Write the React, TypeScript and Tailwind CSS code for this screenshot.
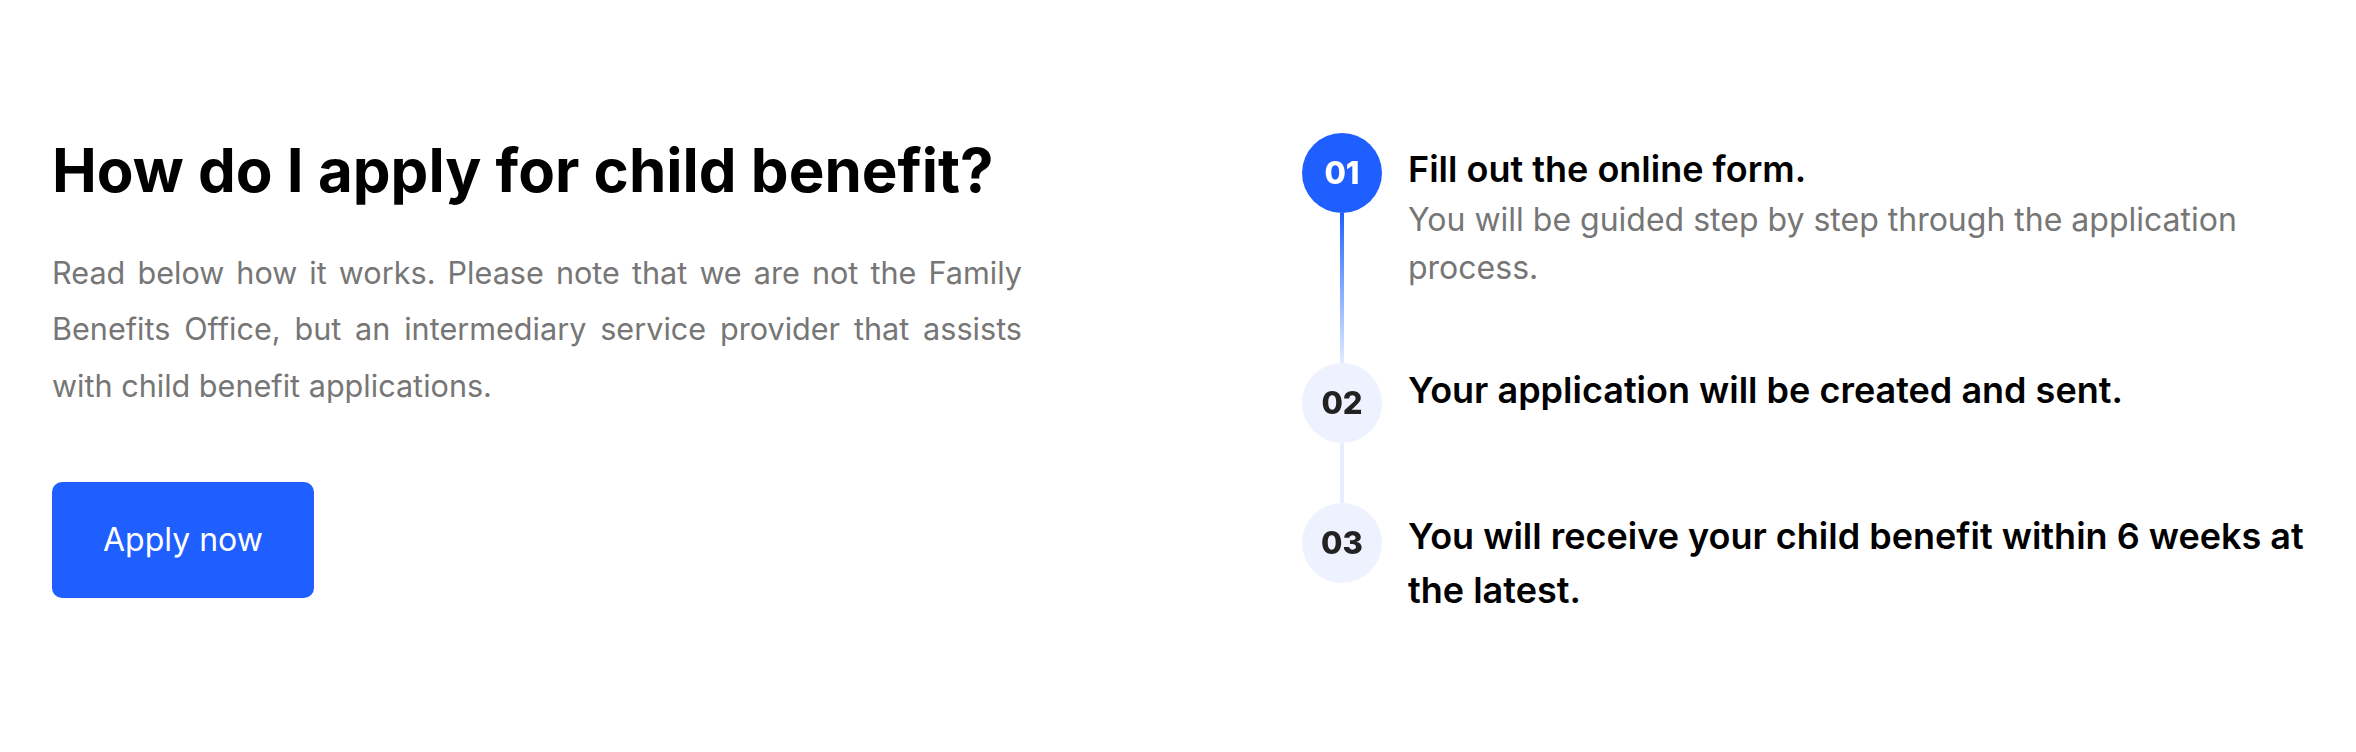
const steps = [
  {
    num: "01",
    title: "Fill out the online form.",
    text: "You will be guided step by step through the application process.",
  },
  { num: "02", title: "Your application will be created and sent." },
  { num: "03", title: "You will receive your child benefit within 6 weeks at the latest." },
];

function Dot({ num, active }: { num: string; active?: boolean }) {
  return (
    <div
      className={
        active
          ? "flex h-[80px] w-[80px] shrink-0 items-center justify-center rounded-full bg-[#1f5eff] text-[31px] font-extrabold text-white blur-[0.4px]"
          : "flex h-[80px] w-[80px] shrink-0 items-center justify-center rounded-full bg-[#edf2fe] text-[31px] font-extrabold text-[#222] blur-[0.4px]"
      }
    >
      {num}
    </div>
  );
}

export default function App() {
  return (
    <div className="min-h-[752px] w-full bg-white px-[52px] pt-[133px] font-['Inter',sans-serif] text-black">
      <div className="grid grid-cols-2 gap-x-[248px]">
        <div>
          <h2 className="mt-px text-[60px] font-bold leading-[72px]">
            How do I apply for child benefit?
          </h2>
          <p className="mt-[39px] max-w-[970px] text-justify text-[30.6px] leading-[56.25px] text-[#767676]">
            Read below how it works. Please note that we are not the Family Benefits Office, but an
            intermediary service provider that assists with child benefit applications.
          </p>
          <button className="mt-[68px] h-[116px] rounded-[10px] bg-[#1f5eff] px-[51px] text-[32px] leading-[48px] text-white">
            Apply now
          </button>
        </div>

        <div className="flex gap-[26px]">
          <div className="flex w-[80px] shrink-0 flex-col items-center">
            <Dot num="01" active />
            <div className="h-[150px] w-[4px] bg-gradient-to-b from-[#1f5eff] to-[#e3ebff]" />
            <Dot num="02" />
            <div className="h-[60px] w-[4px] bg-[#e8eefe]" />
            <Dot num="03" />
          </div>

          <div className="flex-1">
            <div className="mt-[9px]">
              <h3 className="text-[36px] font-semibold leading-[54px]">{steps[0].title}</h3>
              <p className="text-[32px] leading-[48px] text-[#767676]">{steps[0].text}</p>
            </div>
            <h3 className="mt-[71px] text-[36px] font-semibold leading-[54px]">{steps[1].title}</h3>
            <h3 className="mt-[92px] text-[36px] font-semibold leading-[54px]">{steps[2].title}</h3>
          </div>
        </div>
      </div>
    </div>
  );
}
